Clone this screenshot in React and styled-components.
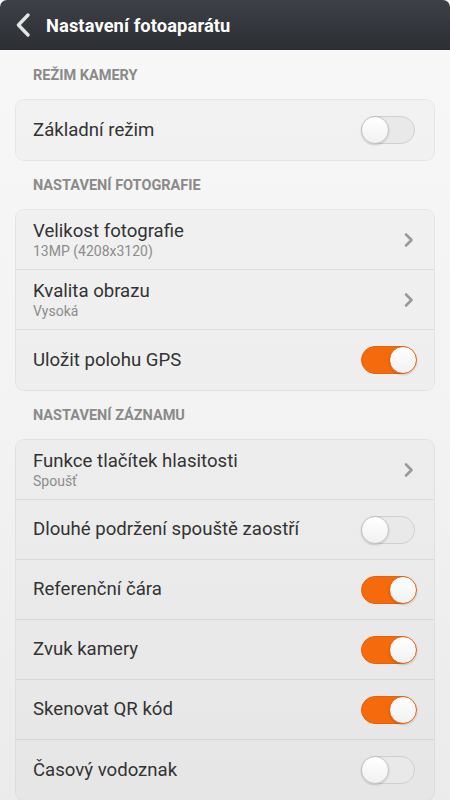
import React from "react";
import styled, { createGlobalStyle } from "styled-components";

const GlobalStyle = createGlobalStyle`
  html, body {
    margin: 0;
    padding: 0;
    background: #f7f7f7;
  }
  body {
    font-family: Roboto, "Noto Sans", "Liberation Sans", sans-serif;
    -webkit-font-smoothing: antialiased;
  }
`;

const sections = [
  {
    title: "Režim kamery",
    items: [{ label: "Základní režim", toggle: false }],
  },
  {
    title: "Nastavení fotografie",
    items: [
      { label: "Velikost fotografie", sub: "13MP (4208x3120)" },
      { label: "Kvalita obrazu", sub: "Vysoká" },
      { label: "Uložit polohu GPS", toggle: true },
    ],
  },
  {
    title: "Nastavení záznamu",
    items: [
      { label: "Funkce tlačítek hlasitosti", sub: "Spoušť" },
      { label: "Dlouhé podržení spouště zaostří", toggle: false },
      { label: "Referenční čára", toggle: true },
      { label: "Zvuk kamery", toggle: true },
      { label: "Skenovat QR kód", toggle: true },
      { label: "Časový vodoznak", toggle: false },
    ],
  },
];

const App = () => {
  const [state, setState] = React.useState(() =>
    sections.map((s) => s.items.map((i) => i.toggle))
  );

  const flip = (si, ii) => {
    setState((prev) =>
      prev.map((row, a) => row.map((v, b) => (a === si && b === ii ? !v : v)))
    );
  };

  return (
    <Screen>
      <GlobalStyle />
      <TopBar>
        <BackButton aria-label="Zpět">
          <svg width="16" height="24" viewBox="0 0 16 24">
            <path
              d="M13 2 L3.5 12 L13 22"
              fill="none"
              stroke="#e4e4e4"
              strokeWidth="3.4"
              strokeLinecap="round"
              strokeLinejoin="round"
            />
          </svg>
        </BackButton>
        <TopTitle>Nastavení fotoaparátu</TopTitle>
      </TopBar>

      <Content>
        {sections.map((section, si) => (
          <React.Fragment key={section.title}>
            <SectionLabel>{section.title}</SectionLabel>
            <Card>
              {section.items.map((item, ii) => (
                <Row key={item.label} onClick={() => item.toggle !== undefined && flip(si, ii)}>
                  <RowText>
                    <RowTitle>{item.label}</RowTitle>
                    {item.sub && <RowSub>{item.sub}</RowSub>}
                  </RowText>
                  {item.toggle !== undefined ? (
                    <Switch on={state[si][ii]}>
                      <Knob on={state[si][ii]} />
                    </Switch>
                  ) : (
                    <svg width="12" height="16" viewBox="0 0 12 16">
                      <path
                        d="M3 2.5 L8.5 8 L3 13.5"
                        fill="none"
                        stroke="#9a9a9a"
                        strokeWidth="2.6"
                        strokeLinecap="round"
                        strokeLinejoin="round"
                      />
                    </svg>
                  )}
                </Row>
              ))}
            </Card>
          </React.Fragment>
        ))}
      </Content>
    </Screen>
  );
};

export default App;

const Screen = styled.div`
  width: 450px;
  height: 800px;
  overflow: hidden;
  background: linear-gradient(to bottom, #f8f8f8 0%, #f3f3f3 50%, #ebebeb 100%);
  display: flex;
  flex-direction: column;
`;

const TopBar = styled.header`
  height: 50px;
  flex-shrink: 0;
  display: flex;
  align-items: center;
  padding: 0 0 0 15px;
  gap: 15px;
  border-radius: 7px 7px 0 0;
  background: linear-gradient(to bottom, #3d4046 0%, #33363b 55%, #2c2e33 100%);
`;

const BackButton = styled.button`
  border: 0;
  padding: 0;
  background: none;
  display: flex;
  align-items: center;
  cursor: pointer;
`;

const TopTitle = styled.h1`
  margin: 0;
  color: #ffffff;
  font-size: 18.3px;
  font-weight: 700;
  letter-spacing: 0.1px;
`;

const Content = styled.main`
  display: flex;
  flex-direction: column;
`;

const SectionLabel = styled.div`
  height: 50px;
  box-sizing: border-box;
  padding: 17px 33px 0;
  font-size: 14.5px;
  line-height: 18px;
  font-weight: 700;
  color: #8a8a8a;
  text-transform: uppercase;
`;

const Card = styled.div`
  margin: 0 16px;
  box-shadow: 0 0 0 1px rgba(0, 0, 0, 0.065);
  border-radius: 8px;
  background: rgba(0, 0, 0, 0.018);
  overflow: hidden;
`;

const Row = styled.div`
  height: 60px;
  box-sizing: border-box;
  display: flex;
  align-items: center;
  justify-content: space-between;
  padding: 0 19px 0 17px;
  border-bottom: 1px solid rgba(0, 0, 0, 0.075);

  &:last-child {
    border-bottom: 0;
  }
`;

const RowText = styled.div`
  display: flex;
  flex-direction: column;
`;

const RowTitle = styled.span`
  font-size: 18.6px;
  line-height: 23px;
  color: #333333;
`;

const RowSub = styled.span`
  font-size: 14px;
  line-height: 17px;
  color: #8c8c8c;
`;

const Switch = styled.div`
  position: relative;
  width: 54px;
  height: 28px;
  box-sizing: border-box;
  border-radius: 14px;
  background: ${(p) => (p.on ? "#f56b0c" : "#e9e9e9")};
  border: 1px solid ${(p) => (p.on ? "#e8620a" : "#cfcfcf")};
  cursor: pointer;
`;

const Knob = styled.div`
  position: absolute;
  top: -1px;
  left: ${(p) => (p.on ? "27px" : "-1px")};
  width: 28px;
  height: 28px;
  box-sizing: border-box;
  border-radius: 50%;
  background: linear-gradient(to bottom, #ffffff, #f1f1f1);
  border: 1px solid ${(p) => (p.on ? "#e0620e" : "#c4c4c4")};
  box-shadow: 0 1px 2px rgba(0, 0, 0, 0.18);
`;
